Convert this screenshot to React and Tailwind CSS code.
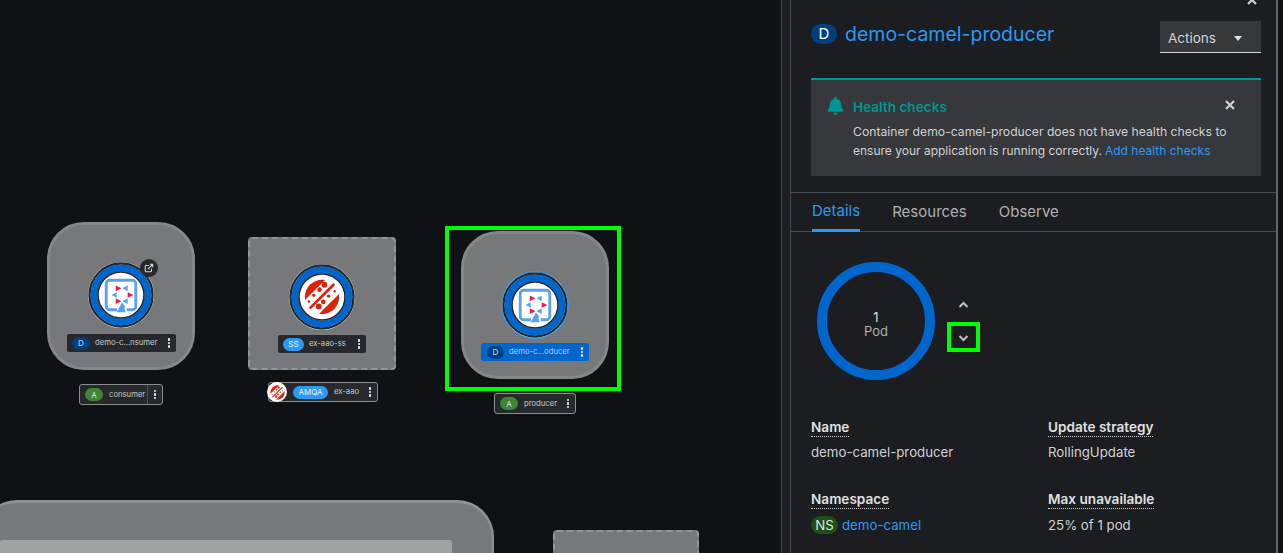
import React from "react";

function CamelIcon({ size = 44 }) {
  return (
    <svg width={size} height={size} viewBox="0 0 44 44">
      <path d="M28 37.500h6a3.500 3.500 0 0 0 3.500-3.500V10A3.500 3.500 0 0 0 34 6.500H10A3.500 3.500 0 0 0 6.500 10v24a3.500 3.500 0 0 0 3.500 3.500h8" fill="none" stroke="#5aa2ee" strokeWidth="3" />
      <path d="M23 29.500l3.500 5-1 1.500 1.500 4H17.500z" fill="#5aa2ee" />
      <path d="M16.500 12l6 3-6 3zM16.500 25.500l6 3-6 3zM29 19l6 3-6 3z" fill="#ee1b4f" />
      <path d="M29 12l-5.500 3 5.500 3zM29 25.500l-5.500 3 5.500 3zM17.500 19L12 22l5.500 3z" fill="#5aa2ee" />
    </svg>
  );
}

function AmqIcon({ size = 44 }) {
  return (
    <svg width={size} height={size} viewBox="0 0 44 44">
      <circle cx="22" cy="22" r="21" fill="#d9230f" />
      <path d="M-2 29L29-2 46 15 15 46z" fill="#fff" />
      <path d="M8 35L36 7" stroke="#d9230f" strokeWidth="3.400" strokeLinecap="round" />
      <circle cx="25" cy="7" r="3.600" fill="#d9230f" />
      <circle cx="19" cy="13" r="2.800" fill="#d9230f" />
      <circle cx="12" cy="20" r="2" fill="#d9230f" />
      <circle cx="6" cy="27.500" r="1.500" fill="#d9230f" />
      <circle cx="18" cy="33.500" r="3.600" fill="#d9230f" />
      <circle cx="23.500" cy="28" r="2.800" fill="#d9230f" />
      <circle cx="30" cy="21" r="2" fill="#d9230f" />
      <circle cx="37.500" cy="15" r="1.500" fill="#d9230f" />
    </svg>
  );
}

function Donut({ children, selected }) {
  return (
    <div className={`relative w-[66px] h-[66px] rounded-full flex items-center justify-center bg-[#fff] ${selected ? "outline outline-1 outline-[#2b9af3]" : ""}`}>
      <svg className="absolute inset-0" width="66" height="66" viewBox="0 0 66 66">
        <circle cx="33" cy="33" r="31.500" fill="none" stroke="#26282c" strokeWidth="2.400" />
        <circle cx="33" cy="33" r="27" fill="none" stroke="#0066cc" strokeWidth="7" />
        <circle cx="33" cy="33" r="23" fill="none" stroke="#26282c" strokeWidth="1.600" />
      </svg>
      <div className="relative flex">{children}</div>
    </div>
  );
}

function Kebab() {
  return (
    <span className="flex flex-col gap-[1px] items-center justify-center w-[4px]">
      <span className="w-[2.5px] h-[2.5px] rounded-full bg-[#f0f0f0]" />
      <span className="w-[2.5px] h-[2.5px] rounded-full bg-[#f0f0f0]" />
      <span className="w-[2.5px] h-[2.5px] rounded-full bg-[#f0f0f0]" />
    </span>
  );
}

function Badge({ text, color, textColor = "#e0e0e0", width }) {
  return (
    <span
      className="flex items-center justify-center rounded-full h-[13px] text-[8px] leading-none"
      style={{ background: color, color: textColor, width }}
    >
      {text}
    </span>
  );
}

function NodeLabel({ badge, badgeColor, badgeText, badgeWidth, name, className, selected, nameColor = "#c8c8c8" }) {
  return (
    <div className={`absolute flex items-center rounded-[2px] h-[18px] ${selected ? "bg-[#0066cc]" : "bg-[#26282c]"} ${className}`}>
      <Badge text={badge} color={badgeColor} textColor={badgeText} width={badgeWidth} />
      <span className="text-[7.7px] ml-[5px] flex-1 whitespace-nowrap" style={{ color: nameColor }}>{name}</span>
      <Kebab />
    </div>
  );
}

function AppLabel({ name, badge, badgeColor, badgeWidth, badgeText, className, divider }) {
  return (
    <div className={`absolute flex items-center rounded-[3px] border border-[#8a8d90] bg-[#26282c] ${className}`}>
      <Badge text={badge} color={badgeColor} textColor={badgeText} width={badgeWidth} />
      <span className="text-[7.7px] text-[#c8c8c8] ml-[6px] flex-1 whitespace-nowrap">{name}</span>
      {divider && <span className="w-px h-full bg-[#4f5255] mr-[5px]" />}
      <Kebab />
    </div>
  );
}

function Term({ children }) {
  return <div className="text-[13.6px] leading-[20px] font-semibold text-[#e0e0e0]">{children}</div>;
}

function Dotted({ children }) {
  return <span className="border-b border-dotted border-[#d2d2d2] pb-[1px]">{children}</span>;
}

export default function App() {
  return (
    <div className="flex w-[1283px] h-[553px] overflow-hidden bg-[#0f1214] font-['Inter',sans-serif]">
      {/* Topology canvas */}
      <div className="relative w-[781px] h-full shrink-0 overflow-hidden bg-[#0f1214]">
        {/* Node 1 */}
        <div className="absolute left-[47px] top-[222px] w-[148px] h-[148px] rounded-[37px] bg-[#77787a] border-[3px] border-[#858789]" />
        <div className="absolute left-[88px] top-[262px]"><Donut><CamelIcon size={42} /></Donut></div>
        <div className="absolute left-[140px] top-[259px] w-[18px] h-[18px] rounded-full bg-[#26282c] flex items-center justify-center">
          <svg width="10" height="10" viewBox="0 0 24 24" fill="none" stroke="#d2d2d2" strokeWidth="2.600" strokeLinecap="round" strokeLinejoin="round">
            <path d="M18 14v5a2 2 0 0 1-2 2H5a2 2 0 0 1-2-2V8a2 2 0 0 1 2-2h5M15 3h6v6M10 14L21 3" />
          </svg>
        </div>
        <NodeLabel className="left-[67px] top-[334px] w-[109px] pl-[5px] pr-[5px]" badge="D" badgeColor="#004080" badgeText="#bee1f4" badgeWidth="18px" name="demo-c...nsumer" />
        <AppLabel className="left-[79px] top-[384px] w-[84px] h-[21px] pl-[5px] pr-[5px]" badge="A" badgeColor="#3e8635" badgeWidth="18px" name="consumer" divider />

        {/* Node 2 */}
        <div className="absolute left-[248px] top-[237px] w-[148px] h-[133px] rounded-[4px] bg-[#77787a] border-[2px] border-dashed border-[#939597]" />
        <div className="absolute left-[289px] top-[264px]"><Donut><AmqIcon size={36} /></Donut></div>
        <NodeLabel className="left-[278px] top-[335px] w-[88px] pl-[5px] pr-[5px]" badge="SS" badgeColor="#2b9af3" badgeText="#f0f0f0" badgeWidth="21px" name="ex-aao-ss" />
        <AppLabel className="left-[268px] top-[382px] w-[110px] h-[20px] pl-[24px] pr-[5px]" badge="AMQA" badgeColor="#2b9af3" badgeText="#f0f0f0" badgeWidth="35px" name="ex-aao" />
        <div className="absolute left-[267px] top-[382px] w-[20px] h-[20px] rounded-full bg-white flex items-center justify-center">
          <AmqIcon size={15} />
        </div>

        {/* Node 3 */}
        <div className="absolute left-[445px] top-[226px] w-[176px] h-[165px] border-[4px] border-[#00ff00]" />
        <div className="absolute left-[461px] top-[231px] w-[148px] h-[148px] rounded-[37px] bg-[#77787a] border-[3px] border-[#858789]" />
        <div className="absolute left-[502px] top-[272px]"><Donut selected><CamelIcon size={42} /></Donut></div>
        <NodeLabel className="left-[481px] top-[343px] w-[108px] pl-[6px] pr-[5px]" selected badge="D" badgeColor="#004080" badgeText="#bee1f4" badgeWidth="17px" name="demo-c...oducer" nameColor="#a9cdf0" />
        <AppLabel className="left-[494px] top-[393px] w-[82px] h-[21px] pl-[5px] pr-[5px]" badge="A" badgeColor="#3e8635" badgeWidth="18px" name="producer" />

        {/* Bottom group */}
        <div className="absolute -left-[20px] top-[500px] w-[514px] h-[120px] rounded-[37px] bg-[#77787a] border-t-[3px] border-r-[2px] border-[#909192]">
          <div className="absolute left-[20px] top-[37px] w-[452px] h-[60px] rounded-[2px] bg-[#a0a2a1]" />
        </div>
        <div className="absolute left-[553px] top-[530px] w-[146px] h-[60px] rounded-[4px] bg-[#77787a] border-[2px] border-dashed border-[#939597]" />
      </div>

      {/* Side panel */}
      <div className="w-[497px] h-full shrink-0 bg-[#1b1d21] border-l border-r-[2px] border-l-[#45484c] border-r-[#63666a] pl-[8px]">
        <div className="h-full border-l border-[#45484c] relative flex flex-col">
          <svg className="absolute left-[455px] -top-[6px]" width="12" height="12" viewBox="0 0 12 12">
            <path d="M2 2l8 8M10 2l-8 8" stroke="#d2d2d2" strokeWidth="2.200" />
          </svg>

          {/* Heading */}
          <div className="flex items-start justify-between pl-[20px] pr-[15px] pt-[21px]">
            <div className="flex items-center gap-[8px] h-[26px]">
              <span className="w-[26px] h-[20px] rounded-full bg-[#004080] text-white text-[15px] flex items-center justify-center">D</span>
              <span className="text-[19.5px] leading-[26px] text-[#2b9af3]">demo-camel-producer</span>
            </div>
            <button className="w-[101px] h-[32px] bg-[#36383c] border-b border-[#d2d2d2] flex items-center pl-[8px] pr-[19px] pt-[3px] justify-between text-[13.5px] text-[#d2d2d2]">
              Actions
              <span className="w-0 h-0 border-l-[4.5px] border-r-[4.5px] border-t-[5px] border-l-transparent border-r-transparent border-t-[#e0e0e0]" />
            </button>
          </div>

          {/* Alert */}
          <div className="ml-[20px] mr-[15px] mt-[25px] h-[98px] bg-[#36383c] border-t-[2px] border-[#009596] pl-[16px] pr-[26px] pt-[16px] flex gap-[9px]">
            <svg className="mt-[1px] shrink-0" width="17" height="18" viewBox="0 0 448 512" fill="#009596">
              <path d="M224 512c35.300 0 64-28.700 64-64H160c0 35.300 28.700 64 64 64zm215.400-149.700c-19.300-20.800-55.500-52-55.500-154.300 0-77.700-54.500-139.900-127.900-155.200V32c0-17.700-14.300-32-32-32s-32 14.300-32 32v20.800C118.600 68.100 64.100 130.300 64.100 208c0 102.300-36.200 133.500-55.500 154.300-6 6.400-8.700 14.100-8.600 21.700.1 16.400 13 32 32.100 32h383.800c19.100 0 32-15.600 32.100-32 .1-7.600-2.600-15.300-8.600-21.700z" />
            </svg>
            <div className="flex-1">
              <div className="flex items-center justify-between h-[22px]">
                <span className="text-[13.6px] font-semibold text-[#009596]">Health checks</span>
                <svg className="-mt-[4px]" width="10" height="10" viewBox="0 0 10 10">
                  <path d="M1 1l8 8M9 1l-8 8" stroke="#d2d2d2" strokeWidth="2.200" />
                </svg>
              </div>
              <div className="text-[12.2px] leading-[19px] mt-[4px] text-[#d2d2d2] whitespace-nowrap">
                <div>Container demo-camel-producer does not have health checks to</div>
                <div className="flex gap-[3px]">
                  <span className="text-[12px]">ensure your application is running correctly.</span>
                  <span className="text-[12px] text-[#2b9af3]">Add health checks</span>
                </div>
              </div>
            </div>
          </div>

          {/* Tabs */}
          <div className="mt-[16px] h-[40px] border-t border-b border-[#45484c] flex pl-[21px] gap-[32px] text-[15px] text-[#b0b0b0]">
            <span className="h-[39px] flex items-center border-b-[3px] border-[#2b9af3] text-[#2b9af3]">Details</span>
            <span className="h-[39px] flex items-center">Resources</span>
            <span className="h-[39px] flex items-center">Observe</span>
          </div>

          {/* Pods */}
          <div className="flex mt-[30px] ml-[26px] h-[118px]">
            <div className="relative w-[118px] h-[118px] pt-[6px] flex flex-col items-center justify-center">
              <svg className="absolute inset-0" width="118" height="118" viewBox="0 0 118 118">
                <circle cx="59" cy="59" r="54" fill="none" stroke="#0066cc" strokeWidth="10" />
              </svg>
              <span className="text-[13px] leading-[14px] text-[#e0e0e0]">1</span>
              <span className="text-[13px] leading-[14px] text-[#b0b0b0]">Pod</span>
            </div>
            <div className="ml-[12px] mt-[39px] flex flex-col items-center w-[33px] self-start">
              <svg width="11" height="8" viewBox="0 0 11 8" className="mb-[13px]">
                <path d="M1.500 6l4-4 4 4" fill="none" stroke="#c0c0c0" strokeWidth="2" />
              </svg>
              <div className="w-[33px] h-[30px] pt-[1px] border-[4px] border-[#00ff00] flex items-center justify-center">
                <svg width="11" height="8" viewBox="0 0 11 8">
                  <path d="M1.500 2l4 4 4-4" fill="none" stroke="#c0c0c0" strokeWidth="2" />
                </svg>
              </div>
            </div>
          </div>

          {/* Details */}
          <div className="grid grid-cols-[237px_1fr] ml-[20px] mt-[37px] gap-y-[27px] text-[13.25px] text-[#d2d2d2]">
            <div>
              <Term><Dotted>Name</Dotted></Term>
              <div className="leading-[20px] mt-[5px]">demo-camel-producer</div>
            </div>
            <div>
              <Term><Dotted>Update strategy</Dotted></Term>
              <div className="leading-[20px] mt-[5px]">RollingUpdate</div>
            </div>
            <div>
              <Term><Dotted>Namespace</Dotted></Term>
              <div className="leading-[20px] mt-[6px] flex items-center gap-[4px]">
                <span className="w-[27px] h-[18px] rounded-full bg-[#1e4f18] text-[#e0e0e0] flex items-center justify-center">NS</span>
                <span className="text-[#2b9af3]">demo-camel</span>
              </div>
            </div>
            <div>
              <Term><Dotted>Max unavailable</Dotted></Term>
              <div className="leading-[20px] mt-[6px]">25% of 1 pod</div>
            </div>
          </div>
        </div>
      </div>
      <div className="flex-1 bg-[#0f1214]" />
    </div>
  );
}
